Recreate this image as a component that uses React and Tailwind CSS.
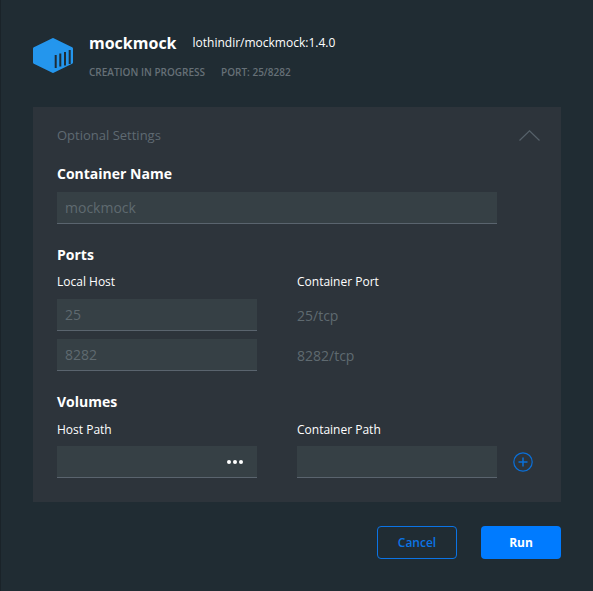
import React from "react";

const font = "font-['Open_Sans','Noto_Sans',sans-serif]";

function Field({ value, className = "", children }) {
  return (
    <div className={`flex items-center h-8 bg-[#364045] border-b border-[#5a646e] pl-2 pr-[14px] text-sm text-[#5f6a70] ${className}`}>
      <span className="flex-1">{value}</span>
      {children}
    </div>
  );
}

function BoxIcon() {
  return (
    <svg width="40" height="35" viewBox="0 0 40 35" className="shrink-0">
      <path d="M20 1.5 L38.5 10.5 V24.5 L20 33.5 L1.5 24.5 V10.5 Z" fill="#2496ed" stroke="#2496ed" strokeWidth="3" strokeLinejoin="round" />
      <path d="M22.7 17 V30 M27.3 15.5 V28.5 M32 14 V27.5 M36.7 12 V26" stroke="#1f2c35" strokeWidth="2" fill="none" />
    </svg>
  );
}

export default function App() {
  return (
    <div className={`${font} w-[593px] h-[591px] bg-[#202c33] border-l border-[#1a2329] pl-8 pr-8 overflow-hidden`}>
      {/* Header */}
      <div className="flex gap-4 h-[107px] pt-[33px]">
        <div className="pt-[5px]">
          <BoxIcon />
        </div>
        <div>
          <div className="flex items-center h-5">
            <span className="text-base font-bold text-white">mockmock</span>
            <span className="ml-4 text-xs font-normal text-white">lothindir/mockmock:1.4.0</span>
          </div>
          <div className="flex gap-4 mt-3 text-[10px] leading-[14px] font-semibold text-[#667077]">
            <span>CREATION IN PROGRESS</span>
            <span>PORT: 25/8282</span>
          </div>
        </div>
      </div>

      {/* Optional settings */}
      <div className="w-[528px] h-[395px] bg-[#2d343b] pl-6 pt-[19px]">
        <div className="flex items-center justify-between h-[19px] pr-[21px]">
          <span className="text-[13px] text-[#5f6a72]">Optional Settings</span>
          <svg width="21" height="11" viewBox="0 0 21 11">
            <path d="M0.5 10.5 L10.5 0.8 L20.5 10.5" stroke="#56616a" strokeWidth="1.2" fill="none" />
          </svg>
        </div>

        <div className="mt-[19px] text-sm leading-5 font-bold text-white">Container Name</div>
        <Field value="mockmock" className="w-110 mt-2" />

        <div className="mt-[21px] text-sm leading-5 font-bold text-white">Ports</div>
        <div className="grid grid-cols-[200px_200px] gap-x-10 mt-2">
          <div className="text-xs leading-[17px] font-normal text-white">Local Host</div>
          <div className="text-xs leading-[17px] font-normal text-white">Container Port</div>
          <Field value="25" className="mt-[9px]" />
          <div className="mt-[9px] pt-[2px] flex items-center text-sm text-[#5f6a70]">25/tcp</div>
          <Field value="8282" className="mt-2" />
          <div className="mt-2 pt-[2px] flex items-center text-sm text-[#5f6a70]">8282/tcp</div>
        </div>

        <div className="mt-[21px] text-sm leading-5 font-bold text-white">Volumes</div>
        <div className="grid grid-cols-[200px_200px_auto] gap-x-10 mt-[9px] w-[476px]">
          <div className="text-xs leading-[17px] font-normal text-white">Host Path</div>
          <div className="col-span-2 text-xs leading-[17px] font-normal text-white">Container Path</div>
          <Field value="" className="mt-2">
            <span className="flex gap-[2px]">
              <i className="block w-1 h-1 rounded-full bg-white" />
              <i className="block w-1 h-1 rounded-full bg-white" />
              <i className="block w-1 h-1 rounded-full bg-white" />
            </span>
          </Field>
          <Field value="" className="mt-2" />
          <div className="mt-2 flex items-center -ml-6">
            <svg width="20" height="20" viewBox="0 0 20 20">
              <circle cx="10" cy="10" r="9.2" stroke="#0a6fd8" strokeWidth="1.2" fill="none" />
              <path d="M10 5.5 V14.5 M5.5 10 H14.5" stroke="#0a6fd8" strokeWidth="1.5" fill="none" />
            </svg>
          </div>
        </div>
      </div>

      {/* Actions */}
      <div className="flex justify-end gap-6 w-[528px] mt-6">
        <button className="w-20 h-[33px] rounded border border-[#0b74e5] text-xs font-semibold text-[#0b74e5]">Cancel</button>
        <button className="w-20 h-[33px] rounded bg-[#007bff] text-xs font-bold text-white">Run</button>
      </div>
    </div>
  );
}
